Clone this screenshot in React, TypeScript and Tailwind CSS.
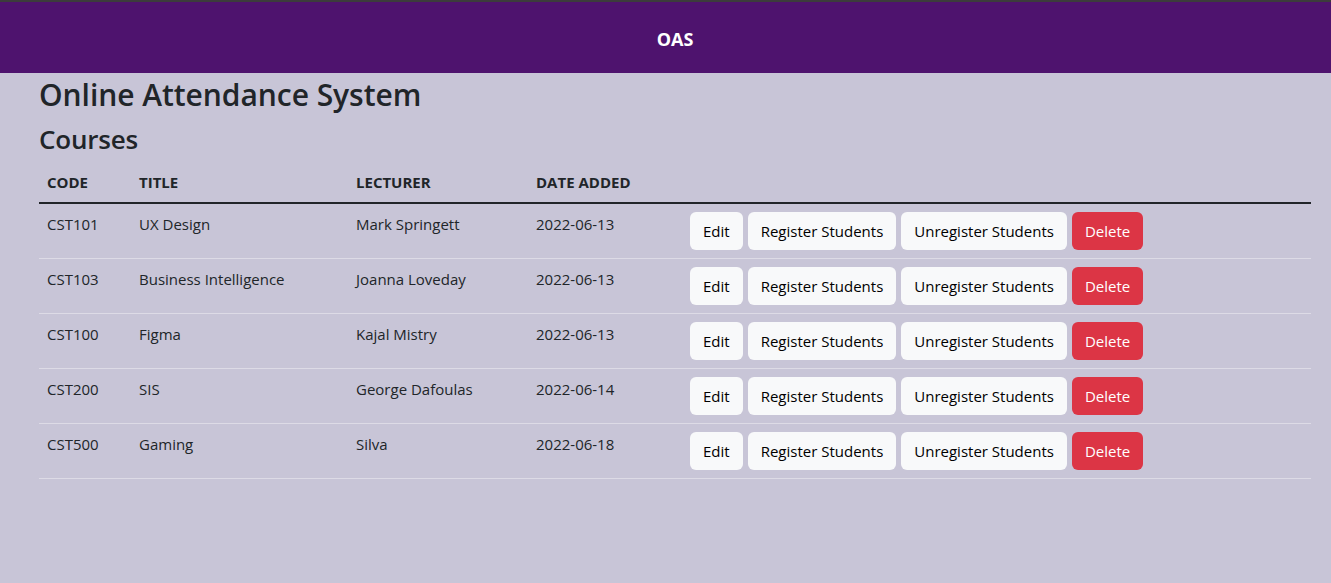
import React from "react";

type Course = {
  code: string;
  title: string;
  lecturer: string;
  date: string;
};

const courses: Course[] = [
  { code: "CST101", title: "UX Design", lecturer: "Mark Springett", date: "2022-06-13" },
  { code: "CST103", title: "Business Intelligence", lecturer: "Joanna Loveday", date: "2022-06-13" },
  { code: "CST100", title: "Figma", lecturer: "Kajal Mistry", date: "2022-06-13" },
  { code: "CST200", title: "SIS", lecturer: "George Dafoulas", date: "2022-06-14" },
  { code: "CST500", title: "Gaming", lecturer: "Silva", date: "2022-06-18" },
];

const App = () => {
  return (
    <div
      className="min-h-[583px] w-full bg-[#c8c5d7] text-[#212529]"
      style={{ fontFamily: '"Open Sans", "Liberation Sans", sans-serif' }}
    >
      <nav className="h-[73px] border-t-2 border-[#3c3c3c] bg-[#4e136e] flex items-center justify-center">
        <span className="ml-[19px] mt-[4px] text-[18px] font-bold text-white">OAS</span>
      </nav>

      <div className="ml-[39px] mr-[20px]">
        <h2 className="mt-[3px] text-[30px] leading-[38px] font-semibold tracking-[-0.05px] mb-2">Online Attendance System</h2>
        <h3 className="text-[26px] leading-[34px] font-semibold tracking-[-0.2px] mb-[6px]">Courses</h3>

        <table className="w-full border-collapse text-[15px]">
          <thead>
            <tr className="border-b-2 border-[#212529]">
              <th className="w-[92px] px-2 py-2 text-left font-bold leading-6">CODE</th>
              <th className="w-[217px] px-2 py-2 text-left font-bold leading-6">TITLE</th>
              <th className="w-[180px] px-2 py-2 text-left font-bold leading-6">LECTURER</th>
              <th className="w-[154px] px-2 py-2 text-left font-bold leading-6">DATE ADDED</th>
              <th className="px-2 py-2"></th>
            </tr>
          </thead>
          <tbody>
            {courses.map(function (item: Course, idx: number) {
              return (
                <tr key={idx} className="border-b border-[#dddbe6] align-top">
                  <td className="px-2 py-2 leading-6">{item.code}</td>
                  <td className="px-2 py-2 leading-6">{item.title}</td>
                  <td className="px-2 py-2 leading-6">{item.lecturer}</td>
                  <td className="px-2 py-2 leading-6">{item.date}</td>
                  <td className="px-2 py-2">
                    <div className="flex gap-[5px] text-[15px]">
                      <button className="h-[38px] px-[13px] rounded-[6px] bg-[#f8f9fa] text-black">Edit</button>
                      <button className="h-[38px] px-[13px] rounded-[6px] bg-[#f8f9fa] text-black">Register Students</button>
                      <button className="h-[38px] px-[13px] rounded-[6px] bg-[#f8f9fa] text-black">Unregister Students</button>
                      <button className="h-[38px] px-[13px] rounded-[6px] bg-[#dc3545] text-white">Delete</button>
                    </div>
                  </td>
                </tr>
              );
            })}
          </tbody>
        </table>
      </div>
    </div>
  );
};

export default App;
